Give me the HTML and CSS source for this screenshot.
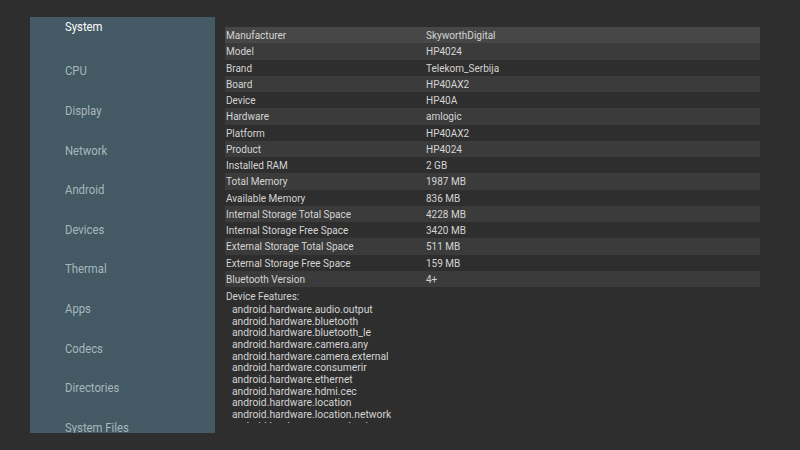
FILE: index.html
```html
<!DOCTYPE html>
<html>
<head>
<meta charset="utf-8">
<link rel="stylesheet" href="styles.css">
</head>
<body>
<div class="screen">
  <nav class="sidebar">
    <div class="item active"><span class="label">System</span></div>
    <div class="item"><span class="label">CPU</span></div>
    <div class="item"><span class="label">Display</span></div>
    <div class="item"><span class="label">Network</span></div>
    <div class="item"><span class="label">Android</span></div>
    <div class="item"><span class="label">Devices</span></div>
    <div class="item"><span class="label">Thermal</span></div>
    <div class="item"><span class="label">Apps</span></div>
    <div class="item"><span class="label">Codecs</span></div>
    <div class="item"><span class="label">Directories</span></div>
    <div class="item"><span class="label">System Files</span></div>
  </nav>
  <main class="content">
    <div class="table">
      <div class="row head"><span class="k">Manufacturer</span><span class="v">SkyworthDigital</span></div>
      <div class="row alt"><span class="k">Model</span><span class="v">HP4024</span></div>
      <div class="row"><span class="k">Brand</span><span class="v">Telekom_Serbija</span></div>
      <div class="row alt"><span class="k">Board</span><span class="v">HP40AX2</span></div>
      <div class="row"><span class="k">Device</span><span class="v">HP40A</span></div>
      <div class="row alt"><span class="k">Hardware</span><span class="v">amlogic</span></div>
      <div class="row"><span class="k">Platform</span><span class="v">HP40AX2</span></div>
      <div class="row alt"><span class="k">Product</span><span class="v">HP4024</span></div>
      <div class="row"><span class="k">Installed RAM</span><span class="v">2 GB</span></div>
      <div class="row alt"><span class="k">Total Memory</span><span class="v">1987 MB</span></div>
      <div class="row"><span class="k">Available Memory</span><span class="v">836 MB</span></div>
      <div class="row alt"><span class="k">Internal Storage Total Space</span><span class="v">4228 MB</span></div>
      <div class="row"><span class="k">Internal Storage Free Space</span><span class="v">3420 MB</span></div>
      <div class="row alt"><span class="k">External Storage Total Space</span><span class="v">511 MB</span></div>
      <div class="row"><span class="k">External Storage Free Space</span><span class="v">159 MB</span></div>
      <div class="row alt"><span class="k">Bluetooth Version</span><span class="v">4+</span></div>
    </div>
    <div class="features">
      <div class="ftitle">Device Features:</div>
      <ul class="flist">
        <li>android.hardware.audio.output</li>
        <li>android.hardware.bluetooth</li>
        <li>android.hardware.bluetooth_le</li>
        <li>android.hardware.camera.any</li>
        <li>android.hardware.camera.external</li>
        <li>android.hardware.consumerir</li>
        <li>android.hardware.ethernet</li>
        <li>android.hardware.hdmi.cec</li>
        <li>android.hardware.location</li>
        <li>android.hardware.location.network</li>
        <li>android.hardware.screen.landscape</li>
        <li>android.hardware.usb.host</li>
      </ul>
    </div>
  </main>
</div>
</body>
</html>
```

FILE: styles.css
```css
html, body {
  margin: 0;
  padding: 0;
  background: #2e2e2e;
  width: 800px;
  height: 450px;
  overflow: hidden;
}
.screen {
  display: flex;
  align-items: flex-start;
  padding: 17px 0 0 30px;
  gap: 10px;
  font-family: Roboto, "Liberation Sans", sans-serif;
}
.sidebar {
  width: 185px;
  height: 416px;
  background: #435963;
  overflow: hidden;
  display: flex;
  flex-direction: column;
}
.item {
  flex: 0 0 auto;
  height: 39.6px;
  display: flex;
  align-items: center;
  padding-left: 35px;
  font-size: 13px;
  color: #a8b7be;
}
.label {
  display: inline-block;
  transform: scaleX(0.87);
  transform-origin: left center;
  white-space: nowrap;
}
.item.active {
  height: 34.2px;
  padding-bottom: 16.2px;
  box-sizing: border-box;
  color: #ffffff;
}
.content {
  width: 535px;
  margin-top: 10px;
  height: 396px;
  overflow: hidden;
  color: #d4d4d4;
  font-size: 10px;
}
.table {
  display: flex;
  flex-direction: column;
}
.row {
  height: 16.25px;
  box-sizing: border-box;
  padding-top: 1px;
  display: grid;
  grid-template-columns: 200px 1fr;
  align-items: center;
  padding-left: 1px;
}
.row.head { background: #474747; }
.row.alt { background: #3b3b3b; }
.features {
  padding-left: 1px;
}
.ftitle {
  height: 17px;
  padding-top: 2px;
  box-sizing: border-box;
  display: flex;
  align-items: center;
}
.flist {
  list-style: none;
  margin: 0;
  padding: 0 0 0 6px;
}
.flist li {
  height: 11.67px;
  line-height: 11.67px;
  font-size: 10.3px;
}
```
